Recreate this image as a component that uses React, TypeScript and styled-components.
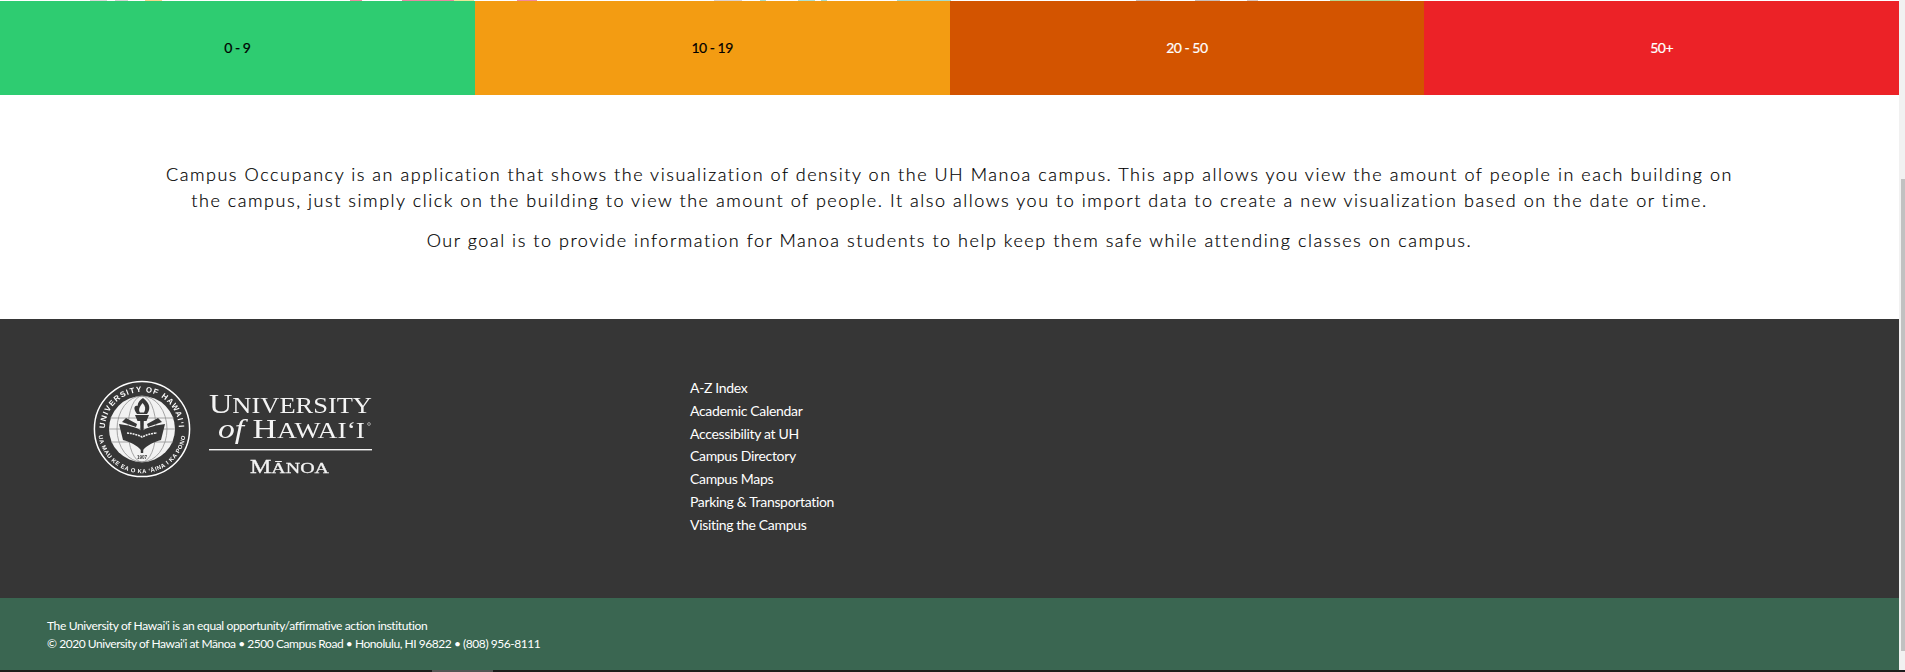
import React from "react";
import styled, { createGlobalStyle } from "styled-components";

const GlobalStyle = createGlobalStyle`
  html, body {
    margin: 0;
    padding: 0;
    height: 672px;
    overflow: hidden;
    background: #fff;
    font-family: Lato, "Helvetica Neue", Arial, sans-serif;
  }
`;

// the map above the legend is scrolled away, only its last pixel row shows
const topBits: [number, string][] = [
  [90, "#fff"], [17, "#d9d9d9"], [8, "#fff"], [13, "#d5d5d5"], [17, "#fff"], [17, "#f5d68c"],
  [188, "#fff"], [12, "#e98da0"], [40, "#fff"], [52, "#e58aa0"], [20, "#e8e79a"], [43, "#fff"],
  [20, "#ee8aa0"], [177, "#fff"], [28, "#ddd3cf"], [18, "#fff"], [6, "#a8dcc8"], [32, "#fff"],
  [17, "#aee0cf"], [6, "#fff"], [6, "#a8dcc8"], [70, "#fff"], [54, "#a5dccb"], [185, "#fff"],
  [24, "#c9bdb9"], [35, "#fff"], [25, "#c9bdb9"], [27, "#fff"], [11, "#d8c6c0"], [72, "#fff"],
  [70, "#b5d892"], [500, "#fff"],
];

const legend = [
  { label: "0 - 9", bg: "#2ecc71", fg: "#000" },
  { label: "10 - 19", bg: "#f39c12", fg: "#000" },
  { label: "20 - 50", bg: "#d35400", fg: "#fff" },
  { label: "50+", bg: "#ec2227", fg: "#fff" },
];

const links = [
  "A-Z Index",
  "Academic Calendar",
  "Accessibility at UH",
  "Campus Directory",
  "Campus Maps",
  "Parking & Transportation",
  "Visiting the Campus",
];

const Logo = () => (
  <LogoSvg viewBox="0 0 280 98" width="280" height="98" aria-label="University of Hawaiʻi Mānoa">
    <defs>
      <path id="sealTop" d="M 13.7 60 A 37 37 0 1 1 84.3 60" />
      <path id="sealBottom" d="M 5.6 42 A 44 44 0 1 0 92.4 42" />
    </defs>
    <circle cx="49" cy="49" r="47.6" fill="none" stroke="#fff" strokeWidth="1.5" />
    <text fontFamily="'Liberation Sans', sans-serif" fontSize="7.8" fontWeight="700" fill="#fff" letterSpacing="1.1" textAnchor="middle">
      <textPath href="#sealTop" startOffset="50%">UNIVERSITY OF HAWAIʻI</textPath>
    </text>
    <text fontFamily="'Liberation Sans', sans-serif" fontSize="5.8" fontWeight="700" fill="#fff" letterSpacing="0.55" textAnchor="middle">
      <textPath href="#sealBottom" startOffset="50%">UA MAU KE EA O KA ʻĀINA I KA PONO</textPath>
    </text>
    <circle cx="49" cy="49" r="33" fill="#f2f2f2" />
    {/* globe */}
    <g fill="none" stroke="#8f8f8f" strokeWidth="0.8">
      <ellipse cx="49" cy="49" rx="14" ry="33" />
      <ellipse cx="49" cy="49" rx="25" ry="33" />
      <path d="M17 38H81M16 49H82M18 62H80" />
    </g>
    {/* feathers and open book */}
    <path d="M33 38 L44 44 L43 47 L29 42 Z M65 38 L54 44 L55 47 L69 42 Z" fill="#363636" />
    <path d="M26 44 C34 45 43 47 49 51 C55 47 64 45 72 44 L68 60 C61 62 54 65 49 71 C44 65 37 62 30 60 Z" fill="#363636" />
    <path d="M47.2 41H50.8L50.2 73H47.8Z" fill="#363636" />
    {/* torch */}
    <path d="M42 35H56L53.5 41H44.5Z" fill="#363636" />
    <path d="M50 18 C57 23 58 29 54 34 H44 C40 29 41 25 44.5 26 C45 22 47 20 50 18 Z" fill="#363636" />
    <path d="M49.5 23 C52.5 26 53 29 51 32.5 H47 C45 30 46.5 27 49.5 23 Z" fill="#f2f2f2" />
    <path d="M34 53 Q42 53.5 49 57 Q56 53.5 64 53" fill="none" stroke="#f2f2f2" strokeWidth="1.6" strokeDasharray="2 0.8" />
    <text x="49" y="78.5" textAnchor="middle" fontFamily="'Liberation Sans', sans-serif" fontSize="4.6" fontWeight="700" fill="#363636">1907</text>

    <text x="116" y="33" fontFamily="'Liberation Serif', serif" fontSize="27.5" fill="#f4f4f4" textLength="163" lengthAdjust="spacingAndGlyphs">
      U<tspan fontSize="22.5">NIVERSITY</tspan>
    </text>
    <text x="125" y="58" fontFamily="'Liberation Serif', serif" fontSize="27.5" fill="#f4f4f4" textLength="147" lengthAdjust="spacingAndGlyphs">
      <tspan fontStyle="italic">of</tspan> H<tspan fontSize="22.5">AWAIʻI</tspan>
    </text>
    <circle cx="276" cy="44" r="1.4" fill="none" stroke="#fff" strokeWidth="0.5" />
    <rect x="116" y="69" width="163" height="1.4" fill="#f4f4f4" />
    <text x="157" y="93" fontFamily="'Liberation Serif', serif" fontSize="18" fontWeight="400" fill="#f4f4f4" stroke="#f4f4f4" strokeWidth="0.3" textLength="79" lengthAdjust="spacingAndGlyphs">
      M<tspan fontSize="15">ĀNOA</tspan>
    </text>
  </LogoSvg>
);

export default function App() {
  return (
    <>
      <GlobalStyle />
      <Shell>
        <Main>
          <Sliver>
            {topBits.map(([width, color], i) => (
              <Bit key={i} $width={width} $color={color} />
            ))}
          </Sliver>
          <Legend>
            {legend.map((item) => (
              <LegendCell key={item.label} $bg={item.bg} $fg={item.fg}>
                {item.label}
              </LegendCell>
            ))}
          </Legend>
          <About>
            <AboutText>
              Campus Occupancy is an application that shows the visualization of density on the UH Manoa campus. This app allows you view the amount of people in each building on the campus, just simply click on the building to view the amount of people. It also allows you to import data to create a new visualization based on the date or time.
            </AboutText>
            <AboutText>
              Our goal is to provide information for Manoa students to help keep them safe while attending classes on campus.
            </AboutText>
          </About>
          <Footer>
            <LogoColumn>
              <Logo />
            </LogoColumn>
            <LinkList>
              {links.map((link) => (
                <FooterLink key={link} href="#">
                  {link}
                </FooterLink>
              ))}
            </LinkList>
          </Footer>
          <Legal>
            <LegalLine $spacing={-0.36}>The University of Hawaiʻi is an equal opportunity/affirmative action institution</LegalLine>
            <LegalLine $spacing={-0.45}>© 2020 University of Hawaiʻi at Mānoa • 2500 Campus Road • Honolulu, HI 96822 • (808) 956-8111</LegalLine>
          </Legal>
        </Main>
        <ScrollTrack>
          <ScrollThumb />
        </ScrollTrack>
      </Shell>
      <TaskStrip>
        <StripGap />
        <StripTab />
      </TaskStrip>
    </>
  );
}

const Shell = styled.div`
  display: flex;
  width: 1905px;
  height: 670px;
  overflow: hidden;
`;

const Main = styled.main`
  width: 1899px;
  flex: none;
`;

const Sliver = styled.div`
  display: flex;
  height: 1px;
  overflow: hidden;
`;

const Bit = styled.span<{ $width: number; $color: string }>`
  flex: none;
  width: ${(p) => p.$width}px;
  background: ${(p) => p.$color};
`;

const Legend = styled.div`
  display: grid;
  grid-template-columns: repeat(4, 1fr);
  height: 94px;
`;

const LegendCell = styled.div<{ $bg: string; $fg: string }>`
  display: flex;
  align-items: center;
  justify-content: center;
  padding-bottom: 2px;
  box-sizing: border-box;
  background: ${(p) => p.$bg};
  color: ${(p) => p.$fg};
  font-size: 14px;
  font-weight: 400;
  letter-spacing: -0.5px;
  -webkit-text-stroke: 0.2px ${(p) => p.$fg};
`;

const About = styled.section`
  height: 224px;
  box-sizing: border-box;
  padding: 66px 155px 0;
  text-align: center;
`;

const AboutText = styled.p`
  margin: 0 0 14px;
  font-size: 18px;
  line-height: 26px;
  letter-spacing: 1.54px;
  font-weight: 300;
  color: #000;
  -webkit-text-stroke: 0.2px #000;
`;

const Footer = styled.footer`
  display: flex;
  height: 279px;
  box-sizing: border-box;
  padding: 58px 0 0 93px;
  background: #363636;
`;

const LogoColumn = styled.div`
  width: 597px;
  flex: none;
  padding-top: 3px;
`;

const LogoSvg = styled.svg`
  display: block;
  filter: blur(0.35px);
`;

const LinkList = styled.nav`
  display: flex;
  flex-direction: column;
`;

const FooterLink = styled.a`
  color: #fff;
  font-size: 14px;
  line-height: 22.8px;
  letter-spacing: -0.33px;
  text-decoration: none;
`;

const Legal = styled.div`
  height: 72px;
  box-sizing: border-box;
  padding: 19px 0 0 47px;
  background: #3a6651;
  color: #fff;
  font-size: 12px;
  line-height: 18px;
`;

const LegalLine = styled.div<{ $spacing: number }>`
  letter-spacing: ${(p) => p.$spacing}px;
`;

const ScrollTrack = styled.div`
  flex: none;
  width: 6px;
  height: 670px;
  background: #f1f1f1;
  padding-top: 179px;
  box-sizing: border-box;
`;

const ScrollThumb = styled.div`
  width: 4px;
  height: 472px;
  margin-left: 2px;
  background: #c1c1c1;
`;

const TaskStrip = styled.div`
  display: flex;
  height: 2px;
  background: #1c1c1c;
`;

const StripGap = styled.span`
  width: 432px;
`;

const StripTab = styled.span`
  width: 61px;
  background: #555;
`;
